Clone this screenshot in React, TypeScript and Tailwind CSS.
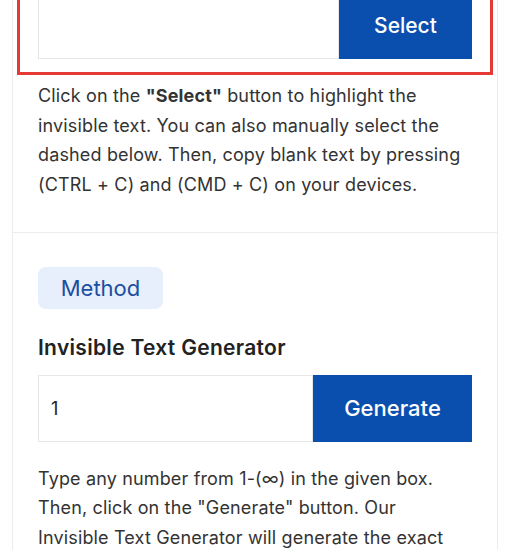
import React, { useState } from 'react';

const App: React.FC = () => {
  const [count, setCount] = useState('1');

  return (
    <div className="min-h-screen bg-white overflow-hidden" style={{ fontFamily: 'Inter, "Noto Sans", sans-serif' }}>
      <div className="mx-3 -mt-[55px] border-x border-[#ececec] bg-white">
        {/* Select section */}
        <div className="px-[4px] pt-[5px] pb-[33px] border-b border-[#ececec]">
          <div className="border-[3px] border-[#e53935] px-[18px] pt-[40px] pb-[13px]">
            <div className="flex h-[66px]">
              <div className="flex-1 border border-[#e6e6e6] bg-white" />
              <button className="w-[133px] bg-[#0a4fae] text-white text-[21px] font-medium">Select</button>
            </div>
          </div>
          <p className="mt-[6px] px-[21px] text-[18px] leading-[29.5px] text-[#333] tracking-[0.15px]">
            Click on the <b className="font-bold">"Select"</b> button to highlight the invisible text. You can also
            manually select the dashed below. Then, copy blank text by pressing (CTRL + C) and (CMD + C) on your
            devices.
          </p>
        </div>

        {/* Generator section */}
        <div className="px-[25px] pt-[34px]">
          <span className="inline-flex h-[42px] w-[125px] items-center justify-center rounded-[8px] bg-[#e7eefc] text-[22px] text-[#1b4f9f]">
            Method
          </span>
          <h2 className="mt-[23px] text-[21px] font-semibold text-[#222] tracking-[0.3px]">Invisible Text Generator</h2>
          <div className="mt-[11px] flex h-[67px]">
            <input
              value={count}
              onChange={e => setCount(e.target.value)}
              className="min-w-0 flex-1 border border-[#e6e6e6] px-3 text-[18px] text-[#222] outline-none"
            />
            <button className="w-[159px] bg-[#0a4fae] text-white text-[22px] font-medium">Generate</button>
          </div>
          <p className="mt-[22px] pr-[14px] text-[18px] leading-[29.5px] text-[#333] tracking-[0.15px]">
            Type any number from 1-(∞) in the given box. Then, click on the "Generate" button. Our Invisible Text
            Generator will generate the exact number of invisible characters for you.
          </p>
        </div>
      </div>
    </div>
  );
};

export default App;
